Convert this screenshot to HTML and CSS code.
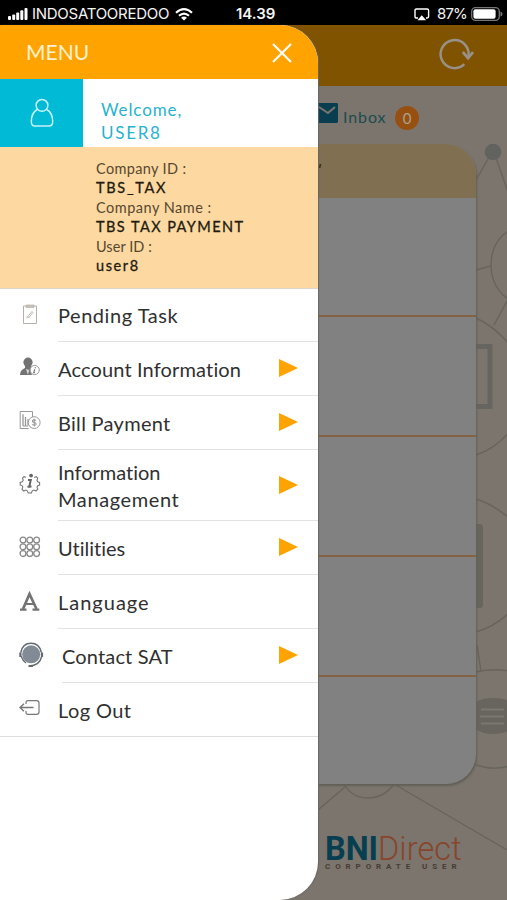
FILE: index.html
```html
<!DOCTYPE html>
<html lang="en">
<head>
<meta charset="utf-8">
<title>BNIDirect</title>
<link rel="stylesheet" href="styles.css">
</head>
<body>
<div class="phone">
  <header class="status">
    <svg class="signal" width="20" height="12" viewBox="0 0 20 12" fill="#fff"><rect x="0" y="8" width="3" height="4" rx="1"/><rect x="4.2" y="6.5" width="3" height="5.5" rx="1"/><rect x="8.2" y="4.5" width="3" height="7.5" rx="1"/><rect x="12.3" y="2.3" width="3" height="9.7" rx="1"/><rect x="16.5" y="0" width="3" height="12" rx="1"/></svg>
    <span class="carrier">INDOSATOOREDOO</span>
    <svg class="wifi" width="18" height="13" viewBox="0 0 18 13"><path d="M1 4.8Q9-2.5 17 4.8M4 7.8Q9 3.4 14 7.8" fill="none" stroke="#fff" stroke-width="2.1"/><path d="M6 9.7Q9 7.3 12 9.7L9 12.6Z" fill="#fff"/></svg>
    <span class="time">14.39</span>
    <svg class="airplay" width="16" height="13" viewBox="0 0 16 13"><path d="M4 10H2.4Q1 10 1 8.6V2.4Q1 1 2.4 1H13.2Q14.6 1 14.6 2.4V8.6Q14.6 10 13.2 10H12" fill="none" stroke="#fff" stroke-width="1.4"/><path d="M7.8 7.2L12.2 12.3H3.4Z" fill="#fff"/></svg>
    <span class="percent">87%</span>
    <svg class="battery" width="32" height="14" viewBox="0 0 32 14"><rect x=".7" y=".7" width="27.6" height="12.6" rx="3.8" fill="none" stroke="#777" stroke-width="1.3"/><rect x="2.4" y="2.3" width="22.2" height="9.4" rx="2" fill="#fff"/><path d="M29.5 4.5Q31.5 5 31.5 7T29.5 9.5Z" fill="#777"/></svg>
  </header>

  <main class="screen">
    <svg class="network" width="189" height="814" viewBox="318 86 189 814" fill="none" stroke="#68645c" stroke-width="1.4">
      <path d="M492 152L476 180M494 152L510 198M476 270L491 266M507 301L494 325M476 318Q494 326 510 345M476 455Q495 449 510 431M476 499Q493 504 510 519M476 632Q494 627 510 612M477 645L481 671M476 672Q492 668 510 671M474 764Q490 771 510 766M394 784L507 850M345 787L318 810M344 784Q352 798 368 798T394 784"/>
      <ellipse cx="520" cy="265" rx="29" ry="37"/>
      <circle cx="493" cy="152" r="8.3" fill="#62625f" stroke="none"/>
      <path d="M474 346.5H490V406.5H474" stroke="#66655f" stroke-width="5"/>
      <path d="M474 524H480Q483 524 483 528V604Q483 608 480 608H474Z" fill="#67665b" stroke="none"/>
      <path d="M476 702Q482 698 493 698T510 702V730Q504 734 493 734T476 729Z" fill="#67655e" stroke="none"/>
      <path d="M481 709.5H504M480 716.5H504M481 723.5H504" stroke="#7c786f" stroke-width="2"/>
    </svg>
    <div class="appbar">
      <svg width="36" height="34" viewBox="0 0 36 34" fill="none" stroke="#989188" stroke-width="2.5"><path d="M26.3 26.2A14 14 0 1 1 30.3 19"/><path d="M24.8 14L30.1 20.2L35 14" stroke-width="2.7"/></svg>
    </div>
    <div class="inbox">
      <svg width="20" height="20" viewBox="0 0 20 20"><rect width="20" height="20" rx="1.4" fill="#083e4f"/><path d="M1 4L10 10L17 4" fill="none" stroke="#7a766f" stroke-width="2"/></svg>
      <span class="inbox-label">Inbox</span>
      <span class="count">0</span>
    </div>
    <section class="card">
      <div class="card-head"><i class="tick"></i></div>
      <div class="slot"></div><div class="slot"></div><div class="slot"></div><div class="slot"></div><div class="slot last"></div>
    </section>
    <footer class="brand">
      <div class="logo"><b>BNI</b><span>Direct</span></div>
      <div class="tag">CORPORATE USER</div>
    </footer>
  </main>

  <aside class="drawer">
    <div class="drawer-head">
      <span class="menu-title">MENU</span>
      <svg width="20" height="20" viewBox="0 0 20 20" stroke="#fff" stroke-width="2.1"><path d="M1 1L19 19M19 1L1 19"/></svg>
    </div>
    <div class="profile">
      <div class="avatar"><svg width="24" height="30" viewBox="0 0 24 30" fill="none" stroke="#c5f4f8" stroke-width="1.5"><circle cx="12" cy="7.3" r="5.9"/><path d="M7.3 11.5Q1.5 14.5 1.3 23.5Q1.3 28 5 28H19Q22.7 28 22.7 23.5Q22.5 14.5 16.7 11.5"/></svg></div>
      <div class="welcome"><div class="hello">Welcome,</div><div class="name">USER8</div></div>
    </div>
    <dl class="company">
      <dt class="k1">Company ID :</dt><dd class="v1">TBS_TAX</dd>
      <dt class="k2">Company Name :</dt><dd class="v2">TBS TAX PAYMENT</dd>
      <dt class="k3">User ID :</dt><dd class="v3">user8</dd>
    </dl>
    <nav class="menu">
      <div class="item"><div class="icon"><svg class="pending" width="22" height="22" viewBox="0 0 22 22" fill="none" stroke="#b5b1a8"><path d="M4.5 3V20.5H17.5V3Z"/><path d="M7 2H15V4.5H7Z" fill="#c6c2b9" stroke-width=".7"/><path d="M8.5 14L13 8.5L14 9.5L9.5 15ZM8 15.2V13.5" stroke-width=".9"/></svg></div>
        <div class="entry"><span class="l-pending">Pending Task</span></div></div>
      <div class="item"><div class="icon"><svg width="22" height="22" viewBox="0 0 22 22"><ellipse cx="9" cy="6.3" rx="4.6" ry="4.8" fill="#737373"/><path d="M6 10H12L15 13Q11 15 13 19H1Q1 14 6 12Z" fill="#737373"/><path d="M7 13L9 19L10 14Z" fill="#ddd"/><circle cx="15.7" cy="14" r="4.6" fill="#fff" stroke="#999"/><path d="M16.4 11.2L16.1 12.3M15.7 13.4L14.8 16.7H15.9" fill="none" stroke="#777" stroke-width="1.2"/></svg></div>
        <div class="entry"><span class="l-account">Account Information</span><i class="arrow"></i></div></div>
      <div class="item"><div class="icon"><svg width="22" height="22" viewBox="0 0 22 22" fill="none" stroke="#999"><path d="M9.5 18.5H1.2V1.5H13.5V7"/><path d="M4 4.2V16M6.5 7V16M9 9V15.5" stroke-width="1.3"/><path d="M4 16H9"/><circle cx="15.2" cy="12.6" r="5.9" fill="#fff"/><path d="M17.2 10.4Q14 9 13.4 11Q13.3 12.3 15.2 12.5Q17.6 13 17 14.5Q16 16 13.2 14.6M15.3 8.8V16.5" stroke-width="1.1"/></svg></div>
        <div class="entry"><span class="l-bill">Bill Payment</span><i class="arrow"></i></div></div>
      <div class="item"><div class="icon"><svg width="22" height="22" viewBox="0 0 22 22" fill="none" stroke="#777"><path d="M7 4.2L5 3.6L3.5 5.2L4.3 7.2L3.2 8.8L1.2 9.4V12L3.2 12.8L3.8 14.3L3 16.3L4.8 18L6.7 17.1L8.3 17.8L9.2 20H12.5L13.2 17.8L15 17.1L17 18L18.8 16.2L18 14.3L18.7 12.7L20.6 12V9.5L18.6 8.8L18 7.2L18.7 5.2L17.2 3.7L15.2 4.5" stroke-width="1.1"/><path d="M9 6.9H11.8L10.3 13.6H12.5M8.5 13.8H11.5" stroke="#666" stroke-width="2"/><circle cx="12.1" cy="2.6" r="1.9" fill="#666" stroke="none"/></svg></div>
        <div class="entry tall"><span class="l-info"><span>Information</span><br><span class="l-manage">Management</span></span><i class="arrow"></i></div></div>
      <div class="item"><div class="icon"><svg width="22" height="22" viewBox="0 0 22 22" fill="none" stroke="#888" stroke-width="1.3"><circle cx="4" cy="4" r="2.9"/><circle cx="10.8" cy="4" r="2.9"/><circle cx="17.6" cy="4" r="2.9"/><circle cx="4" cy="10.8" r="2.9"/><circle cx="10.8" cy="10.8" r="2.9"/><circle cx="17.6" cy="10.8" r="2.9"/><circle cx="4" cy="17.6" r="2.9"/><circle cx="10.8" cy="17.6" r="2.9"/><circle cx="17.6" cy="17.6" r="2.9"/></svg></div>
        <div class="entry"><span class="l-util">Utilities</span><i class="arrow"></i></div></div>
      <div class="item"><div class="icon"><svg width="22" height="22" viewBox="0 0 22 22" fill="none" stroke="#737373"><path d="M4 19L10.5 4L17.5 19" stroke-width="2.7"/><path d="M6 14H15.5" stroke-width="2"/><path d="M1 19.6H7.5M13.5 19.6H20.3" stroke-width="2.2"/></svg></div>
        <div class="entry"><span class="l-lang">Language</span></div></div>
      <div class="item"><div class="icon wide"><svg width="26" height="26" viewBox="0 0 26 26" fill="none" stroke="#626a70"><circle cx="13.2" cy="12.3" r="9" fill="#828b95" stroke="none"/><path d="M2.8 10.5Q4.5 1.2 13 1.2T23.4 10.5" stroke-width="1.5"/><path d="M2.4 10.5V15M24 10.5V15" stroke-width="2.2"/><path d="M3 14Q5 19 8 21M23.5 15Q21.5 23.8 11 24" stroke-width="1.4"/><path d="M10.5 24H15" stroke-width="2"/></svg></div>
        <div class="entry"><span class="l-contact">Contact SAT</span><i class="arrow"></i></div></div>
      <div class="item end"><div class="icon"><svg width="22" height="22" viewBox="0 0 22 22" fill="none" stroke="#777" stroke-width="1.2"><path d="M7 7V5.5Q7 3.6 9 3.6H17.5Q20 3.6 20 6V15Q20 17.4 17.5 17.4H9Q7 17.4 7 15.5V14"/><path d="M5 6.8L1 10.5L5 14.2M1 10.5H14.5" stroke-width="1.5"/></svg></div>
        <div class="entry"><span class="l-logout">Log Out</span></div></div>
    </nav>
  </aside>
</div>
</body>
</html>
```

FILE: styles.css
```css
* { box-sizing: border-box; }
body { margin: 0; background: #7b756d; font-family: Lato, "Liberation Sans", sans-serif; font-variant-ligatures: none; }
.phone { position: relative; width: 507px; height: 900px; overflow: hidden; display: flex; flex-direction: column; }
svg { display: block; flex: none; }

.status { height: 25px; flex: none; background: #000; color: #f5f5f5; display: flex; align-items: center; padding: 3px 4px 0 8px; font: 15px/20px Inter, sans-serif; }
.carrier { width: 137px; margin-left: 4px; letter-spacing: -.27px; white-space: nowrap; }
.wifi { margin-left: 6px; }
.time { width: 41px; margin-left: 43px; font-weight: 600; white-space: nowrap; }
.airplay { margin-left: auto; }
.percent { width: 30px; margin: 0 4px 0 7px; white-space: nowrap; letter-spacing: -.9px; }

.screen { flex: 1; position: relative; display: flex; flex-direction: column; padding-left: 318px; background: #7b756d; }
.network { position: absolute; left: 318px; top: 61px; }
.appbar { height: 61px; margin-left: -318px; background: #805300; display: flex; align-items: center; justify-content: flex-end; padding: 0 33px 2px 0; flex: none; }
.inbox { height: 57.5px; flex: none; display: flex; align-items: center; padding: 4px 0 0; position: relative; }
.inbox svg { margin-top: -7px; }
.inbox-label { width: 43px; margin-left: 5px; color: #204b50; font-size: 16px; letter-spacing: .9px; }
.count { width: 24px; height: 24px; margin: 2px 0 0 9px; border-radius: 50%; background: #985011; color: #aaa095; font-size: 15px; line-height: 24px; text-align: center; }
.card { position: relative; width: 158px; height: 640px; flex: none; background: #818181; border-radius: 0 30px 30px 0; overflow: hidden; box-shadow: 1px 2px 2px #625f59; }
.card-head { height: 54px; background: #807051; padding-top: 20px; }
.tick { display: block; width: 2px; height: 4px; margin-left: 1px; background: #3d3627; transform: skewX(-15deg); }
.slot { height: 119.8px; border-bottom: 2px solid #836343; }
.slot.last { border: 0; }
.brand { position: relative; margin: 51px 0 0 7px; width: 140px; }
.logo { height: 28px; display: flex; font: 300 32.5px/28px Roboto, sans-serif; color: #88452c; white-space: nowrap; }
.logo b { font-weight: 700; color: #073f50; letter-spacing: -.1px; }
.logo span { letter-spacing: .1px; }
.tag { font: 700 8px/8px Roboto, sans-serif; letter-spacing: 4.9px; color: #473c34; white-space: nowrap; }

.drawer { position: absolute; left: 0; top: 25px; width: 318px; height: 875px; background: #fff; border-radius: 0 38px 38px 0; overflow: hidden; box-shadow: 1px 0 1px #666; }
.drawer-head { height: 54px; background: #ffa300; display: flex; align-items: center; justify-content: space-between; padding: 2px 26px 0 26px; color: #fff1cf; }
.menu-title { font-size: 21px; letter-spacing: 0; margin-top: -4px; }
.profile { height: 67.5px; display: flex; }
.avatar { width: 83px; background: #00bad6; display: flex; align-items: center; justify-content: center; }
.welcome { padding: 19px 0 0 18px; color: #27b3cc; font-size: 17px; line-height: 23px; }
.hello { letter-spacing: .9px; }
.name { letter-spacing: 1.7px; }
.company { margin: 0; height: 142px; background: #fdd8a0; border-bottom: 1px solid #ddd6cc; padding: 12px 0 0 96px; font-size: 14.5px; line-height: 19.6px; color: #554831; }
.company dd { margin: 0; color: #211b10; -webkit-text-stroke: .3px; }
.k1 { letter-spacing: .35px; }
.k2 { letter-spacing: .5px; }
.k3 { letter-spacing: .05px; }
.v1 { letter-spacing: 1.7px; }
.v2 { letter-spacing: 1.45px; }
.v3 { letter-spacing: 1.6px; }

.item { display: flex; height: 53.8px; }
.item:first-child { height: 53.6px; }
.item:nth-child(4) { height: 71.8px; }
.icon { width: 58px; padding: 0 0 3px 19px; display: flex; align-items: center; flex: none; }
.icon.wide { width: 62px; padding-left: 18px; padding-bottom: 1px; }
.entry { flex: 1; display: flex; align-items: center; justify-content: space-between; padding: 2px 20px 0 0; border-bottom: 1px solid #e2e2e2; font-size: 20px; line-height: 27px; color: #303030; white-space: nowrap; }
.end { border-bottom: 1px solid #dedede; }
.end .entry { border: 0; }
.arrow { width: 0; height: 0; border-left: 19px solid #ffa300; border-top: 9px solid transparent; border-bottom: 9px solid transparent; margin-bottom: 3px; }
.l-pending { letter-spacing: .55px; }
.l-account { letter-spacing: .15px; }
.l-bill { letter-spacing: .3px; }
.l-manage { letter-spacing: .6px; }
.l-util { letter-spacing: 0; }
.l-lang { letter-spacing: 1px; }
.l-contact { letter-spacing: .15px; }
.l-logout { letter-spacing: .4px; }
```
